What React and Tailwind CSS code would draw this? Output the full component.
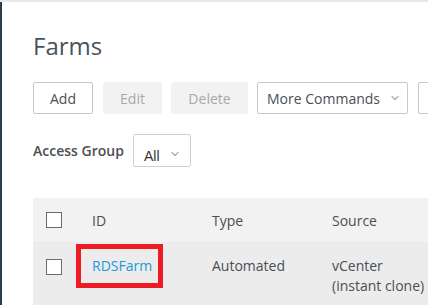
import { ChevronDown } from 'lucide-react'

const font = { fontFamily: '"Open Sans", "Noto Sans", sans-serif' }

function Chevron({ className = '' }) {
  return <ChevronDown className={`w-3 h-3 text-[#a8b0b8] ${className}`} strokeWidth={2.5} />
}

export default function App() {
  return (
    <div
      className="w-[428px] h-[305px] overflow-hidden bg-white border-t-2 border-[#e9e9e9] text-[14px] text-[#4a4f55]"
      style={font}
    >
      <div className="h-full border-l-2 border-[#2f3d48] pl-[31px] pt-[28px] overflow-hidden">
        {/* 标题 */}
        <h1 className="text-[24px] leading-[32px] text-[#48525c]">Farms</h1>

        {/* 工具栏 */}
        <div className="mt-[20px] flex items-center whitespace-nowrap w-[500px]">
          <button className="shrink-0 w-[60px] h-[32px] border border-[#c8c8c8] rounded-[2px] bg-white text-[#4a4f55]">
            Add
          </button>
          <button className="shrink-0 ml-[10px] w-[59px] h-[32px] rounded-[2px] bg-[#f2f2f2] text-[#a9a9a9]">
            Edit
          </button>
          <button className="shrink-0 ml-[9px] w-[77px] h-[32px] rounded-[2px] bg-[#f2f2f2] text-[#a9a9a9]">
            Delete
          </button>
          <button className="shrink-0 ml-[9px] w-[151px] h-[32px] border border-[#c8c8c8] rounded-[2px] bg-white flex items-center justify-between pl-[9px] pr-[6px]">
            <span>More Commands</span>
            <Chevron />
          </button>
          <button className="shrink-0 ml-[10px] w-[60px] h-[32px] border border-[#c8c8c8] rounded-[2px] bg-white" />
        </div>

        {/* 访问组 */}
        <div className="mt-[20px] flex items-center">
          <span className="font-semibold text-[#4a4f55] w-[100px]">Access Group</span>
          <div className="w-[58px] h-[33px] border border-[#cfcfcf] rounded-[2px] flex items-start justify-between pl-[10px] pr-[9px] pt-[13px]">
            <span className="text-[14px] leading-[16px] text-[#333]" style={{ fontFamily: '"Liberation Sans", Arial, sans-serif' }}>
              All
            </span>
            <Chevron />
          </div>
        </div>

        {/* 表格 */}
        <div className="mt-[31px] w-[420px]">
          <div className="h-[45px] bg-[#f2f2f2] flex items-center border-b border-[#ebebeb]">
            <div className="w-[59px] pl-[13px]">
              <div className="w-[16px] h-[16px] border border-[#6b6b6b] bg-white" />
            </div>
            <div className="w-[120px]">ID</div>
            <div className="w-[120px]">Type</div>
            <div className="flex-1">Source</div>
          </div>
          <div className="h-[70px] bg-[#ececec] flex items-start">
            <div className="w-[59px] pl-[13px] pt-[16px]">
              <div className="w-[16px] h-[16px] border border-[#6b6b6b] bg-white" />
            </div>
            <div className="w-[120px] relative pt-[13px] leading-[20px]">
              <span className="text-[#1a9bd7]">RDSFarm</span>
              <div className="absolute left-[-16px] top-[1px] w-[87px] h-[44px] border-[5px] border-[#ed1c24]" />
            </div>
            <div className="w-[120px] pt-[13px] leading-[20px]">Automated</div>
            <div className="flex-1 pt-[13px] leading-[20px]">
              vCenter
              <br />
              (instant clone)
            </div>
          </div>
        </div>
      </div>
    </div>
  )
}
